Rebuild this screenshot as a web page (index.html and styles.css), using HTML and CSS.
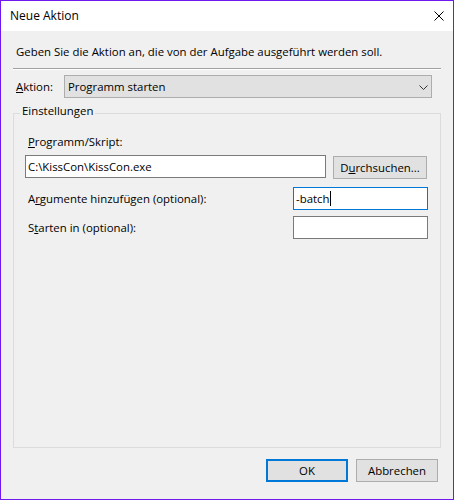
FILE: index.html
```html
<!DOCTYPE html>
<html lang="de">
<head>
<meta charset="utf-8">
<title>Neue Aktion</title>
<link rel="stylesheet" href="styles.css">
</head>
<body>
<div class="window">
  <div class="titlebar">
    <span class="title">Neue Aktion</span>
    <svg class="close" width="10" height="10" viewBox="0 0 10 10"><path d="M0.5 0.5 L9.5 9.5 M9.5 0.5 L0.5 9.5" stroke="#000" stroke-width="1" fill="none"/></svg>
  </div>
  <div class="content">
    <p class="intro">Geben Sie die Aktion an, die von der Aufgabe ausgeführt werden soll.</p>
    <div class="sep"></div>
    <div class="action-row">
      <span class="lbl-action"><u>A</u>ktion:</span>
      <div class="combo">
        <span class="combo-text">Programm starten</span>
        <svg class="chevron" width="9" height="5" viewBox="0 0 9 5"><path d="M0.5 0.5 L4.5 4.5 L8.5 0.5" stroke="#333" stroke-width="1" fill="none"/></svg>
      </div>
    </div>
    <fieldset class="group">
      <legend class="group-title">Einstellungen</legend>
      <div class="group-body">
        <div class="field-label"><u>P</u>rogramm/Skript:</div>
        <div class="prog-row">
          <div class="textbox wide">C:\KissCon\KissCon.exe</div>
          <button class="btn browse" type="button">D<u>u</u>rchsuchen...</button>
        </div>
        <div class="opt-row first">
          <span class="opt-label">A<u>r</u>gumente hinzufügen (optional):</span>
          <div class="textbox short focused">-batch<span class="caret"></span></div>
        </div>
        <div class="opt-row second">
          <span class="opt-label">S<u>t</u>arten in (optional):</span>
          <div class="textbox short"></div>
        </div>
      </div>
    </fieldset>
    <div class="footer">
      <button class="btn ok" type="button">OK</button>
      <button class="btn" type="button">Abbrechen</button>
    </div>
  </div>
</div>
</body>
</html>
```
FILE: styles.css
```css
html, body {
  margin: 0;
  padding: 0;
  background: #ffffff;
}

body {
  font-family: "Open Sans", "Noto Sans", sans-serif;
  font-size: 11.4px;
  color: #000;
}

u {
  text-decoration: underline;
  text-underline-offset: 1px;
}

.window {
  width: 454px;
  height: 500px;
  box-sizing: border-box;
  border: 1px solid #7019ee;
  display: flex;
  flex-direction: column;
  background: #f0f0f0;
}

.titlebar {
  height: 30px;
  background: #ffffff;
  display: flex;
  align-items: center;
  padding: 0 9px 0 9px;
  flex-shrink: 0;
}

.title {
  flex: 1;
  font-size: 12px;
  line-height: 16px;
}

.close {
  display: block;
}

.content {
  flex: 1;
  display: flex;
  flex-direction: column;
  padding: 0 12px 17px 12px;
  min-height: 0;
}

.intro {
  margin: 13px 0 0 3px;
  line-height: 16px;
}

.sep {
  margin-top: 8px;
  height: 0;
  border-top: 1px solid #a0a0a0;
  border-bottom: 1px solid #ffffff;
}

.action-row {
  margin: 5px 9px 0 0;
  display: flex;
  align-items: center;
}

.lbl-action {
  width: 48px;
  padding-left: 3px;
  line-height: 16px;
}

.combo {
  flex: 1;
  height: 23px;
  box-sizing: border-box;
  border: 1px solid #adadad;
  background: #e1e1e1;
  display: flex;
  align-items: center;
  padding: 0 3px 0 3px;
}

.combo-text {
  flex: 1;
  line-height: 16px;
}

.chevron {
  display: block;
  margin-top: 1px;
}

.group {
  flex: 1;
  margin: 5px 0 0 0;
  padding: 0;
  border: 1px solid #dcdcdc;
  min-width: 0;
}

.group-title {
  margin-left: 6px;
  padding: 0 2px 4px 2px;
  line-height: 16px;
}

.group-body {
  padding: 0 12px 0 11px;
}

.field-label {
  margin-top: 11px;
  padding-left: 3px;
  line-height: 16px;
}

.prog-row {
  margin-top: 5px;
  display: flex;
  align-items: flex-start;
  gap: 7px;
}

.textbox {
  height: 23px;
  box-sizing: border-box;
  border: 1px solid #7a7a7a;
  background: #ffffff;
  padding: 0 2px;
  line-height: 21px;
  white-space: nowrap;
  display: flex;
  align-items: center;
}

.textbox.wide {
  width: 301px;
}

.textbox.short {
  width: 135px;
}

.textbox.focused {
  border-color: #0078d7;
}

.caret {
  display: inline-block;
  width: 1px;
  height: 15px;
  background: #000;
  margin-left: 1px;
}

.btn {
  font-family: inherit;
  font-size: 11.4px;
  color: #000;
  height: 23px;
  box-sizing: border-box;
  border: 1px solid #adadad;
  background: #e1e1e1;
  padding: 0;
  margin: 0;
  line-height: 16px;
  border-radius: 0;
}

.btn.browse {
  width: 94px;
  margin-top: 1px;
}

.opt-row {
  display: flex;
  align-items: center;
  justify-content: space-between;
}

.opt-row.first {
  margin-top: 8px;
}

.opt-row.second {
  margin-top: 6px;
}

.opt-label {
  padding-left: 3px;
  line-height: 16px;
}

.footer {
  margin: 11px 3px 0 0;
  display: flex;
  justify-content: flex-end;
  gap: 8px;
}

.footer .btn {
  width: 82px;
}

.btn.ok {
  border: 2px solid #0078d7;
}
```
